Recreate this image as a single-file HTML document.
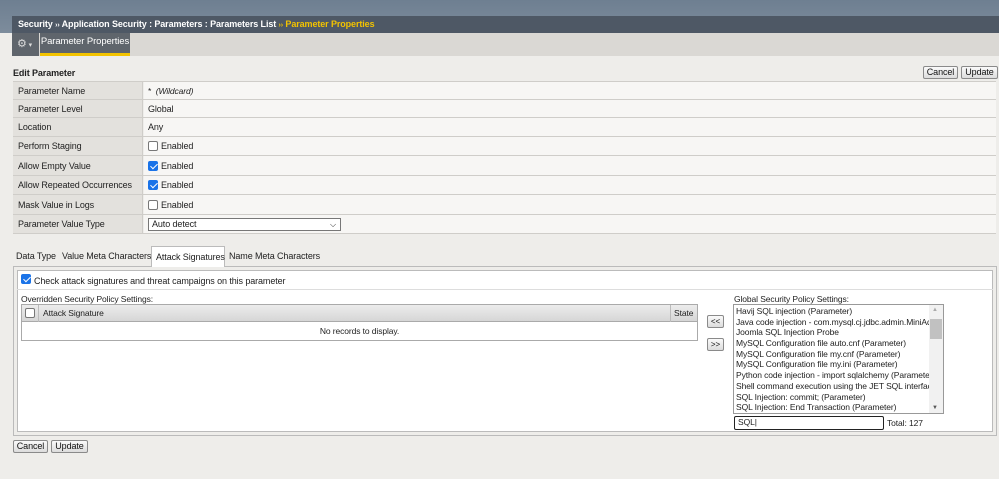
<!DOCTYPE html>
<html><head><style>
*{box-sizing:border-box;margin:0;padding:0}
body{width:999px;height:479px;overflow:hidden;background:#eeedea;font-family:"Liberation Sans",Arial,sans-serif;font-size:9px;letter-spacing:-0.1px;color:#222;position:relative;white-space:nowrap}
.a{position:absolute}
.btn{position:absolute;height:13px;border:1px solid #8a8a8a;background:linear-gradient(#fafafa,#dcdcdc);font-size:9px;line-height:11px;text-align:center;border-radius:2px;color:#111}
.row{position:absolute;left:13px;width:983px;border-bottom:1px solid #cfcdc9}
.lab{position:absolute;left:0;top:0;bottom:0;width:130px;background:#e3e1dd;border-right:1px solid #cfcdc9;padding-left:5px;display:flex;align-items:center}
.val{position:absolute;left:131px;right:0;top:0;bottom:0;background:#f7f6f4;padding-left:4px;display:flex;align-items:center}
.cb{display:inline-block;width:10px;height:10px;border:1px solid #777;border-radius:2px;background:#fff;margin-right:3px;position:relative;top:0px}
.cb.on{background:#1a73e8;border-color:#1a73e8}
.cb.on:after{content:"";position:absolute;left:2.5px;top:0px;width:3px;height:6px;border:solid #fff;border-width:0 1.5px 1.5px 0;transform:rotate(45deg)}
.li{height:10.7px;line-height:10.7px;white-space:nowrap;overflow:hidden}
</style></head><body>
<div class="a" style="left:0;top:0;width:999px;height:33px;background:linear-gradient(#6e7f91,#7d8c9c)"></div>
<div class="a" style="left:12px;top:16px;width:987px;height:17px;background:#4e5865;color:#fff;font-weight:bold;font-size:9px;line-height:17px;padding-left:6px">Security <span style="font-size:7px">››</span> Application Security : Parameters : Parameters List <span style="color:#f3c300;font-size:7px">››</span> <span style="color:#f3c300">Parameter Properties</span></div>
<div class="a" style="left:12px;top:33px;width:987px;height:23px;background:#dad8d4"></div>
<div class="a" style="left:12px;top:33px;width:27px;height:23px;background:#5f656c;color:#ddd;font-size:11px;line-height:23px;padding-left:5px">⚙<span style="font-size:7px"> ▾</span></div>
<div class="a" style="left:40px;top:33px;width:90px;height:23px;background:#5f656c;border-bottom:3px solid #f3c300;color:#fff;font-size:9.5px;line-height:18px;text-align:center">Parameter Properties</div>
<div class="a" style="left:13px;top:68px;font-weight:bold;font-size:9px">Edit Parameter</div>
<div class="btn" style="left:923px;top:66px;width:35px">Cancel</div>
<div class="btn" style="left:961px;top:66px;width:37px">Update</div>
<div class="a" style="left:13px;top:81px;width:983px;height:1px;background:#cfcdc9"></div>
<div class="row" style="top:82px;height:18px"><div class="lab">Parameter Name</div><div class="val" style="font-size:8.5px">* &nbsp;<i>(Wildcard)</i></div></div>
<div class="row" style="top:100px;height:18px"><div class="lab">Parameter Level</div><div class="val">Global</div></div>
<div class="row" style="top:118px;height:19px"><div class="lab">Location</div><div class="val">Any</div></div>
<div class="row" style="top:137px;height:19px"><div class="lab">Perform Staging</div><div class="val"><span class="cb"></span>Enabled</div></div>
<div class="row" style="top:156px;height:20px"><div class="lab">Allow Empty Value</div><div class="val"><span class="cb on"></span>Enabled</div></div>
<div class="row" style="top:176px;height:19px"><div class="lab">Allow Repeated Occurrences</div><div class="val"><span class="cb on"></span>Enabled</div></div>
<div class="row" style="top:195px;height:20px"><div class="lab">Mask Value in Logs</div><div class="val"><span class="cb"></span>Enabled</div></div>
<div class="row" style="top:215px;height:19px"><div class="lab">Parameter Value Type</div><div class="val"><div style="width:193px;height:13px;border:1px solid #777;background:#fff;padding-left:3px;line-height:11px;position:relative">Auto detect<span style="position:absolute;right:4px;top:0;font-size:8px">⌵</span></div></div></div>
<div class="a" style="left:16px;top:251px">Data Type</div>
<div class="a" style="left:62px;top:251px">Value Meta Characters</div>
<div class="a" style="left:151px;top:246px;width:74px;height:21px;background:#fff;border:1px solid #bbb;border-bottom:none;padding:5px 0 0 4px;z-index:2">Attack Signatures</div>
<div class="a" style="left:229px;top:251px">Name Meta Characters</div>
<div class="a" style="left:13px;top:266px;width:984px;height:170px;border:1px solid #bbb;background:#eeedea"></div>
<div class="a" style="left:17px;top:270px;width:976px;height:162px;border:1px solid #bbb;background:#fff"></div>
<div class="a" style="left:17px;top:270px;width:976px;height:20px;border-bottom:1px solid #ddd;padding:4px 0 0 4px"><span class="cb on"></span>Check attack signatures and threat campaigns on this parameter</div>
<div class="a" style="left:21px;top:294px;font-size:8.5px">Overridden Security Policy Settings:</div>
<div class="a" style="left:21px;top:304px;width:677px;height:37px;border:1px solid #aaa;background:#fff"></div>
<div class="a" style="left:22px;top:305px;width:675px;height:17px;background:linear-gradient(#ececec,#d6d6d6);border-bottom:1px solid #aaa"></div>
<div class="a" style="left:25px;top:308px"><span class="cb"></span></div>
<div class="a" style="left:38px;top:305px;height:17px;border-left:1px solid #bbb;padding:3px 0 0 4px;font-size:8.5px">Attack Signature</div>
<div class="a" style="left:670px;top:305px;height:17px;border-left:1px solid #bbb;padding:3px 0 0 3px;font-size:8.5px">State</div>
<div class="a" style="left:22px;top:326px;width:675px;text-align:center;font-size:8.5px">No records to display.</div>
<div class="btn" style="left:707px;top:315px;width:17px;font-size:8px">&lt;&lt;</div>
<div class="btn" style="left:707px;top:338px;width:17px;font-size:8px">&gt;&gt;</div>
<div class="a" style="left:734px;top:294px;font-size:8.5px">Global Security Policy Settings:</div>
<div class="a" style="left:733px;top:304px;width:211px;height:110px;border:1px solid #999;background:#fff;font-size:8.5px;padding:1px 0 0 2px;overflow:hidden">
<div style="width:194px">
<div class="li">Havij SQL injection (Parameter)</div>
<div class="li">Java code injection - com.mysql.cj.jdbc.admin.MiniAdmin</div>
<div class="li">Joomla SQL Injection Probe</div>
<div class="li">MySQL Configuration file auto.cnf (Parameter)</div>
<div class="li">MySQL Configuration file my.cnf (Parameter)</div>
<div class="li">MySQL Configuration file my.ini (Parameter)</div>
<div class="li">Python code injection - import sqlalchemy (Parameter)</div>
<div class="li">Shell command execution using the JET SQL interface</div>
<div class="li">SQL Injection: commit; (Parameter)</div>
<div class="li">SQL Injection: End Transaction (Parameter)</div>
</div>
<div style="position:absolute;right:0;top:0;width:14px;height:108px;background:#f1f1f1"><div style="position:absolute;left:1px;top:14px;width:12px;height:20px;background:#c1c1c1"></div><div style="position:absolute;left:3px;top:2px;font-size:6px;color:#aaa">▲</div><div style="position:absolute;left:3px;bottom:2px;font-size:6px;color:#555">▼</div></div>
</div>
<div class="a" style="left:734px;top:416px;width:150px;height:14px;border:1.5px solid #222;border-radius:2px;background:#fff;font-size:8.5px;padding-left:3px;line-height:11px">SQL|</div>
<div class="a" style="left:887px;top:418px;font-size:8.5px">Total: 127</div>
<div class="btn" style="left:13px;top:440px;width:35px">Cancel</div>
<div class="btn" style="left:51px;top:440px;width:37px">Update</div>
</body></html>
